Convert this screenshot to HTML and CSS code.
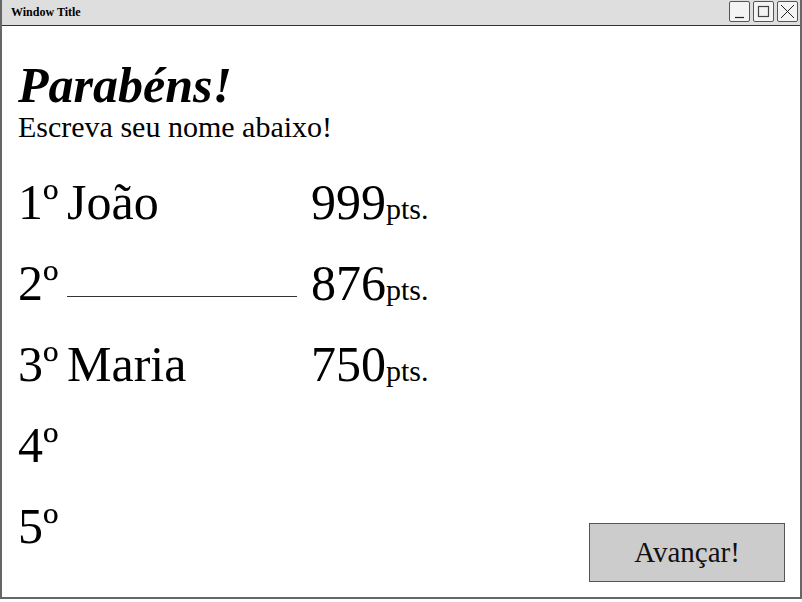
FILE: index.html
```html
<!DOCTYPE html>
<html>
<head>
<meta charset="utf-8">
<link rel="stylesheet" href="styles.css">
</head>
<body>
<div class="window">
  <div class="titlebar">
    <span class="title">Window Title</span>
    <div class="controls">
      <span class="ctl"><svg width="19" height="19" viewBox="0 0 19 19"><path d="M5 15.5H14" stroke="#222" stroke-width="1.2"/></svg></span>
      <span class="ctl"><svg width="19" height="19" viewBox="0 0 19 19"><rect x="4.5" y="4.5" width="10" height="10" fill="none" stroke="#444" stroke-width="1.2"/></svg></span>
      <span class="ctl"><svg width="19" height="19" viewBox="0 0 19 19"><path d="M3 3L16 16M16 3L3 16" stroke="#222" stroke-width="1"/></svg></span>
    </div>
  </div>
  <div class="body">
    <h1 class="heading">Parabéns!</h1>
    <p class="sub">Escreva seu nome abaixo!</p>
    <div class="main">
      <div class="ranking">
        <div class="row">
          <span class="rank">1º</span>
          <span class="name">João</span>
          <span class="score">999<span class="pts">pts.</span></span>
        </div>
        <div class="row">
          <span class="rank">2º</span>
          <span class="name"><span class="input"></span></span>
          <span class="score">876<span class="pts">pts.</span></span>
        </div>
        <div class="row">
          <span class="rank">3º</span>
          <span class="name">Maria</span>
          <span class="score">750<span class="pts">pts.</span></span>
        </div>
        <div class="row">
          <span class="rank">4º</span>
        </div>
        <div class="row">
          <span class="rank">5º</span>
        </div>
      </div>
      <button class="next">Avançar!</button>
    </div>
  </div>
</div>
</body>
</html>
```
FILE: styles.css
```css
html, body {
  margin: 0;
  padding: 0;
  background: #ffffff;
}
body {
  font-family: "Liberation Serif", "Times New Roman", serif;
  color: #000;
}
.window {
  box-sizing: border-box;
  width: 802px;
  height: 599px;
  border: 2px solid #666;
  border-top: none;
  display: flex;
  flex-direction: column;
}
.titlebar {
  box-sizing: border-box;
  height: 26px;
  background: #dedede;
  border-bottom: 1px solid #333;
  display: flex;
  align-items: center;
  justify-content: space-between;
  padding: 0 2px 0 9px;
}
.title {
  font-weight: bold;
  font-size: 12px;
}
.controls {
  display: flex;
  gap: 3px;
  align-self: flex-start;
  padding-top: 1px;
}
.ctl {
  box-sizing: border-box;
  width: 21px;
  height: 21px;
  border: 1px solid #555;
  border-radius: 2px;
  background: #f4f4f4;
  display: flex;
  align-items: center;
  justify-content: center;
}
.body {
  flex: 1;
  display: flex;
  flex-direction: column;
  padding: 0 15px 15px 16px;
}
.heading {
  margin: 34px 0 0 0;
  font-size: 50px;
  line-height: 1;
  font-style: italic;
  font-weight: bold;
}
.sub {
  margin: 2px 0 0 0;
  font-size: 30px;
  line-height: 1;
}
.main {
  flex: 1;
  display: flex;
  justify-content: space-between;
}
.ranking {
  margin-top: 35px;
  display: flex;
  flex-direction: column;
}
.row {
  height: 81px;
  display: flex;
  align-items: baseline;
  font-size: 50px;
  line-height: 1;
}
.rank {
  width: 49px;
}
.name {
  width: 244px;
}
.input {
  display: inline-block;
  width: 230px;
  height: 1px;
  background: #333;
  vertical-align: 3px;
}
.score {
  white-space: nowrap;
}
.pts {
  font-size: 30px;
}
.next {
  align-self: flex-end;
  box-sizing: border-box;
  width: 196px;
  height: 59px;
  background: #cccccc;
  border: 1px solid #555;
  font-family: "Liberation Serif", "Times New Roman", serif;
  font-size: 29px;
  color: #111;
  padding: 0;
}
```
